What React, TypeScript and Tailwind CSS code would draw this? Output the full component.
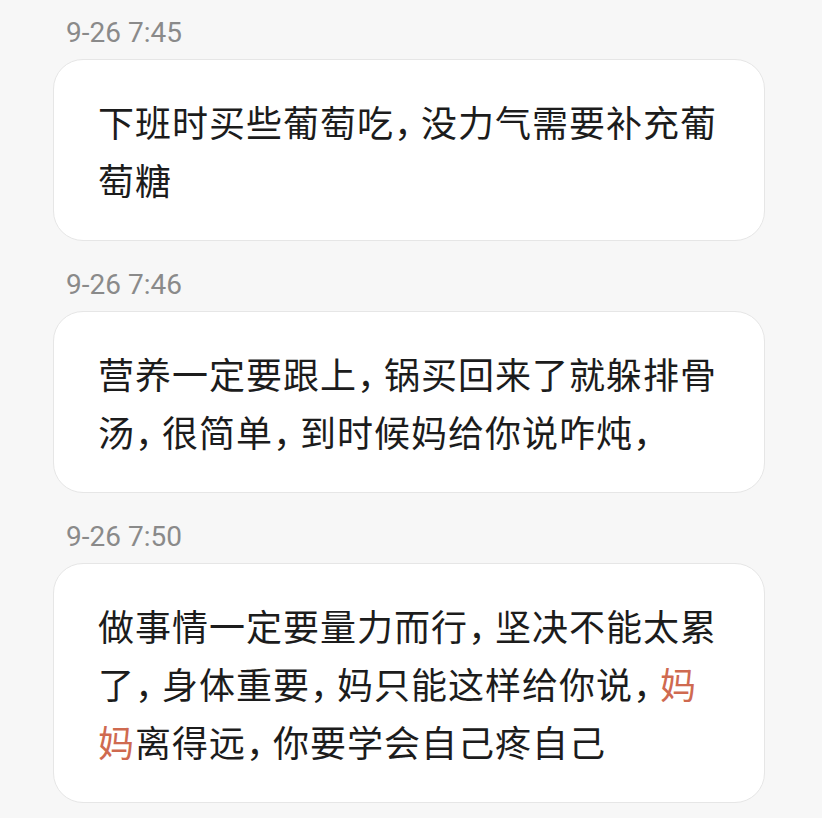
import React from "react";

const C = () => <span className="mr-[8px] [font-feature-settings:'halt']">，</span>;
const R = ({ children }: { children: React.ReactNode }) => (
  <span className="text-[#cf6a50]">{children}</span>
);

const messages: { time: string; body: React.ReactNode }[] = [
  {
    time: "9-26 7:45",
    body: (
      <>
        下班时买些葡萄吃<C />没力气需要补充葡萄糖
      </>
    ),
  },
  {
    time: "9-26 7:46",
    body: (
      <>
        营养一定要跟上<C />锅买回来了就躲排骨汤<C />很简单<C />到时候妈给你说咋炖<C />
      </>
    ),
  },
  {
    time: "9-26 7:50",
    body: (
      <>
        做事情一定要量力而行<C />坚决不能太累了<C />身体重要<C />妈只能这样给你说<C />
        <R>妈妈</R>离得远<C />你要学会自己疼自己
      </>
    ),
  },
];

export default function App() {
  return (
    <div className="min-h-[818px] w-[822px] bg-[#f7f7f7] pt-[19px] pb-[20px]">
      <div className="ml-[53px] flex w-[712px] flex-col gap-[30px]">
        {messages.map((m) => (
          <div key={m.time} className="flex flex-col">
            <div
              className="mb-3 pl-[13px] text-[28px] leading-[28px] text-[#8a8a8a]"
              style={{ fontFamily: "Roboto, 'Noto Sans', sans-serif" }}
            >
              {m.time}
            </div>
            <div
              className="rounded-[30px] border border-[#e6e6e6] bg-white pt-[32px] pb-[32px] pl-[44px] pr-[44px] text-[36px] leading-[58px] tracking-[1px] text-[#1c1c1c]"
              style={{ fontFamily: "'Noto Sans CJK SC', 'Noto Sans', sans-serif" }}
            >
              {m.body}
            </div>
          </div>
        ))}
      </div>
    </div>
  );
}
